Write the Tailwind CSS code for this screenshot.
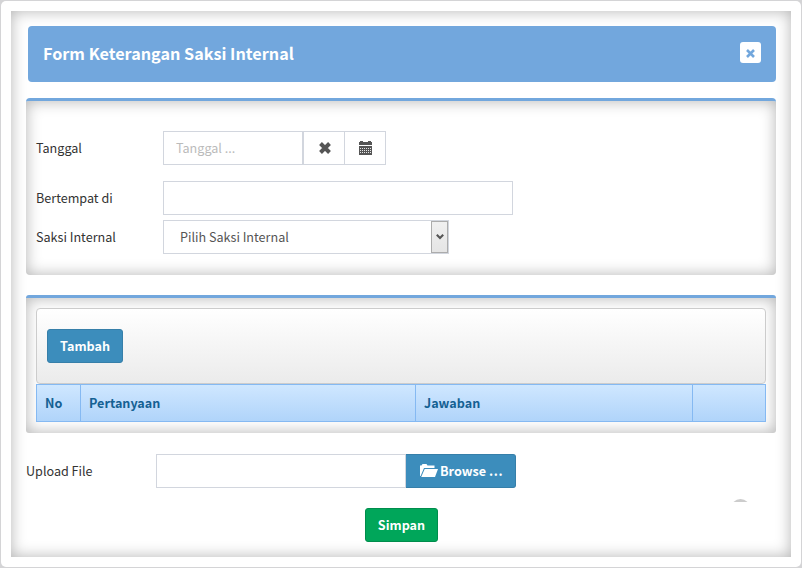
<!DOCTYPE html>
<html lang="id">
<head>
<meta charset="utf-8">
<title>Form Keterangan Saksi Internal</title>
<script src="https://cdn.jsdelivr.net/npm/@tailwindcss/browser@4"></script>
</head>
<body class="w-[802px] h-[568px] overflow-hidden bg-[#d4d4d6] p-px font-['Noto_Sans_CJK_SC','Noto_Sans',sans-serif] text-[12.6px] leading-5 text-[#333]">
<div class="h-[566px] w-[800px] rounded-[5px] bg-white p-[10px]">
<main class="relative h-[546px] w-[780px] pl-[15px] pr-[15px] pt-[15px] shadow-[inset_0_0_15px_rgba(0,0,0,0.3)]">
  <header class="ml-[2px] flex h-14 items-center justify-between rounded bg-[#72a7dd] pl-[15px] pr-[15px] text-white">
    <h1 class="mb-[2px] text-[16.2px] font-bold leading-6">Form Keterangan Saksi Internal</h1>
    <button class="mb-[3px] flex size-[21px] items-center justify-center rounded-[3px] bg-white" aria-label="Tutup">
      <svg class="mt-[2px]" width="9" height="9" viewBox="0 0 9 9"><path d="M1 1L8 8M8 1L1 8" stroke="#72a7dd" stroke-width="2.6"/></svg>
    </button>
  </header>

  <section class="mt-4 h-[177px] rounded border-t-[3px] border-[#72a7dd] px-[10px] pt-[30px] shadow-[inset_0_0_15px_rgba(0,0,0,0.3)]">
    <div class="flex h-[34px] items-center">
      <label class="w-[127px]">Tanggal</label>
      <div class="flex h-[34px] w-[140px] items-center border border-[#d2d6de] bg-white pl-3 text-[#bbb]">Tanggal ...</div>
      <button class="flex h-[34px] w-[42px] items-center justify-center border border-[#d2d6de] bg-white pl-[2px]" aria-label="Hapus">
        <svg width="12" height="12" viewBox="0 0 12 12"><path d="M1.5 1.5L10.5 10.5M10.5 1.5L1.5 10.5" stroke="#555" stroke-width="4"/></svg>
      </button>
      <button class="-ml-px flex h-[34px] w-[42px] items-center justify-center border border-[#d2d6de] bg-white pl-px" aria-label="Kalender">
        <svg width="13" height="14" viewBox="0 0 13 14" shape-rendering="crispEdges"><path fill="#555" d="M0 1h1V0h3v1h5V0h3v1h1v3H0zM0 5h13v9H0z"/><path d="M1 7.5h11M1 9.5h11M1 11.5h11" stroke="#fff" stroke-dasharray="1 1" opacity=".85"/></svg>
      </button>
    </div>
    <div class="mt-4 flex h-[34px] items-center">
      <label class="w-[127px]">Bertempat di</label>
      <div class="h-[34px] w-[350px] border border-[#d2d6de] bg-white"></div>
    </div>
    <div class="mt-[5px] flex h-[34px] items-center">
      <label class="w-[127px]">Saksi Internal</label>
      <div class="flex h-[34px] w-[286px] items-center justify-between border border-[#d2d6de] bg-white pl-4 text-[#555]">
        <span>Pilih Saksi Internal</span>
        <span class="flex h-8 w-[17px] items-center justify-center border border-[#acacac] bg-linear-to-b from-[#f0f0f0] to-[#e5e5e5]">
          <svg width="8" height="6" viewBox="0 0 8 6"><path d="M.8.8L4 4L7.2.8" fill="none" stroke="#555" stroke-width="2.1"/></svg>
        </span>
      </div>
    </div>
  </section>

  <section class="mt-5 h-[138px] rounded-[3px] border-t-[3px] border-[#72a7dd] px-[10px] pt-[10px] shadow-[inset_0_0_15px_rgba(0,0,0,0.3)]">
    <div class="h-[76px] rounded border border-[#ccc] bg-linear-to-b from-white to-[#ebebeb] pl-[10px] pt-5">
      <button class="h-[34px] w-[76px] rounded-[3px] border border-[#367fa9] bg-[#3c8dbc] font-bold text-white">Tambah</button>
    </div>
    <div class="grid h-[38px] grid-cols-[44px_335px_277px_72px] items-stretch border border-[#85b9f2] bg-linear-to-b from-[#cfe7ff] to-[#b0d4fa] font-bold leading-9 text-[#156193]">
      <div class="border-r border-[#85b9f2] pl-2">No</div>
      <div class="border-r border-[#85b9f2] pl-2">Pertanyaan</div>
      <div class="border-r border-[#85b9f2] pl-2">Jawaban</div>
      <div></div>
    </div>
  </section>

  <div class="mt-[21px] flex h-[34px] items-center">
    <label class="w-[130px]">Upload File</label>
    <div class="h-[34px] w-[250px] border border-[#d2d6de] bg-white"></div>
    <button class="flex h-[34px] w-[110px] items-center rounded-r-[3px] border border-l-0 border-[#367fa9] bg-[#3c8dbc] pl-[14px] font-bold text-white">
      <svg class="mb-[2px] mr-[2px]" width="18" height="13" viewBox="0 0 18 13"><path fill="#fff" d="M0 12V1.5h1.5L2.5 0h4L7.5 1.5h7V4H4L.6 12zM4.7 5H18l-3 8H1.2z"/></svg>
      <span class="whitespace-nowrap">Browse <span class="tracking-[.7px]">...</span></span>
    </button>
  </div>
  <div class="mt-5 flex justify-center pl-[1px]">
    <button class="h-[34px] w-[73px] rounded-[3px] border border-[#008d4c] bg-[#00a65a] font-bold text-white">Simpan</button>
  </div>
  <div class="absolute left-[721px] top-[488px] h-[3px] w-[17px] overflow-hidden"><div class="-ml-px size-[19px] rounded-full bg-[#ccc]"></div></div>
</main>
</div>
</body>
</html>
